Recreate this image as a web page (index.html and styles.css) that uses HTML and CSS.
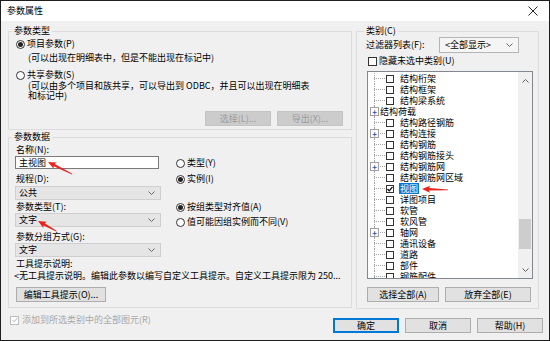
FILE: index.html
```html
<!DOCTYPE html>
<html lang="zh-CN">
<head>
    <meta charset="UTF-8">
    <meta name="viewport" content="width=device-width, initial-scale=1.0">
    <title>参数属性</title>
    <link rel="stylesheet" href="styles.css">
</head>
<body>
<div class="dialog">
    <div class="titlebar">
        <span class="title">参数属性</span>
        <svg class="close" width="10" height="10" viewBox="0 0 10 10"><path d="M0.5 0.5L9.5 9.5M9.5 0.5L0.5 9.5" stroke="#111" stroke-width="0.9" fill="none"/></svg>
    </div>

    <div class="client">
        <div class="main">
            <div class="left-col">
                <!-- 参数类型 -->
                <div class="group group-type">
                    <span class="legend">参数类型</span>
                    <div class="radio-row row-project"><span class="radio checked"></span>项目参数(P)</div>
                    <div class="hint">(可以出现在明细表中，但是不能出现在标记中)</div>
                    <div class="radio-row row-shared"><span class="radio"></span>共享参数(S)</div>
                    <div class="hint hint-multi">(可以由多个项目和族共享，可以导出到 ODBC，并且可以出现在明细表<br>和标记中)</div>
                    <div class="btn-row">
                        <button class="btn disabled">选择(L)...</button>
                        <button class="btn disabled">导出(X)...</button>
                    </div>
                </div>

                <!-- 参数数据 -->
                <div class="group group-data">
                    <span class="legend">参数数据</span>
                    <div class="fields">
                        <div class="fcol">
                            <div class="flabel">名称(N):</div>
                            <div class="input">主视图</div>
                            <div class="flabel lbl-discipline">规程(D):</div>
                            <div class="select sel-first"><span>公共</span><svg width="7" height="4" viewBox="0 0 7 4"><path d="M0.5 0.5L3.5 3.5L6.5 0.5" stroke="#666" fill="none"/></svg></div>
                            <div class="flabel lbl-type">参数类型(T):</div>
                            <div class="select"><span>文字</span><svg width="7" height="4" viewBox="0 0 7 4"><path d="M0.5 0.5L3.5 3.5L6.5 0.5" stroke="#666" fill="none"/></svg></div>
                            <div class="flabel lbl-group">参数分组方式(G):</div>
                            <div class="select"><span>文字</span><svg width="7" height="4" viewBox="0 0 7 4"><path d="M0.5 0.5L3.5 3.5L6.5 0.5" stroke="#666" fill="none"/></svg></div>
                        </div>
                        <div class="rcol">
                            <div class="radio-row r-type"><span class="radio"></span>类型(Y)</div>
                            <div class="radio-row r-inst"><span class="radio checked"></span>实例(I)</div>
                            <div class="radio-row r-align"><span class="radio checked"></span>按组类型对齐值(A)</div>
                            <div class="radio-row r-vary"><span class="radio"></span>值可能因组实例而不同(V)</div>
                        </div>
                    </div>
                    <div class="flabel lbl-tip">工具提示说明:</div>
                    <div class="tip-text">&lt;无工具提示说明。编辑此参数以编写自定义工具提示。自定义工具提示限为 250...</div>
                    <button class="btn btn-tip">编辑工具提示(O)...</button>
                </div>
            </div>

            <!-- 类别 -->
            <div class="group group-cat">
                <span class="legend legend-cat">类别(C)</span>
                <div class="filter-row">
                    <span class="filter-label">过滤器列表(F):</span>
                    <div class="select select-filter"><span>&lt;全部显示&gt;</span><svg width="7" height="4" viewBox="0 0 7 4"><path d="M0.5 0.5L3.5 3.5L6.5 0.5" stroke="#666" fill="none"/></svg></div>
                </div>
                <div class="check-row"><span class="cb"></span>隐藏未选中类别(U)</div>

                <div class="listbox">
                    <div class="items">
                        <div class="row"><span class="tree"></span><span class="cb"></span>结构桁架</div>
                        <div class="row"><span class="tree"></span><span class="cb"></span>结构框架</div>
                        <div class="row"><span class="tree"></span><span class="cb"></span>结构梁系统</div>
                        <div class="row"><span class="tree short"><span class="exp">+</span></span>结构荷载</div>
                        <div class="row"><span class="tree"></span><span class="cb"></span>结构路径钢筋</div>
                        <div class="row"><span class="tree"><span class="exp">+</span></span><span class="cb"></span>结构连接</div>
                        <div class="row"><span class="tree"></span><span class="cb"></span>结构钢筋</div>
                        <div class="row"><span class="tree"></span><span class="cb"></span>结构钢筋接头</div>
                        <div class="row"><span class="tree"><span class="exp">+</span></span><span class="cb"></span>结构钢筋网</div>
                        <div class="row"><span class="tree"></span><span class="cb"></span>结构钢筋网区域</div>
                        <div class="row"><span class="tree"></span><span class="cb checked"><svg width="6" height="6" viewBox="0 0 6 6"><path d="M0.5 3L2.2 4.8L5.5 0.8" stroke="#000" stroke-width="1.2" fill="none"/></svg></span><span class="sel">视图</span></div>
                        <div class="row"><span class="tree"></span><span class="cb"></span>详图项目</div>
                        <div class="row"><span class="tree"></span><span class="cb"></span>软管</div>
                        <div class="row"><span class="tree"></span><span class="cb"></span>软风管</div>
                        <div class="row"><span class="tree"><span class="exp">+</span></span><span class="cb"></span>轴网</div>
                        <div class="row"><span class="tree"></span><span class="cb"></span>通讯设备</div>
                        <div class="row"><span class="tree"></span><span class="cb"></span>道路</div>
                        <div class="row"><span class="tree"></span><span class="cb"></span>部件</div>
                        <div class="row"><span class="tree"></span><span class="cb"></span>钢筋配件</div>
                    </div>
                    <div class="scroll">
                        <div class="sb-btn"><svg width="7" height="4" viewBox="0 0 7 4"><path d="M0.5 3.5L3.5 0.5L6.5 3.5" stroke="#606060" fill="none"/></svg></div>
                        <div class="thumb"></div>
                        <div class="sb-space"></div>
                        <div class="sb-btn"><svg width="7" height="4" viewBox="0 0 7 4"><path d="M0.5 0.5L3.5 3.5L6.5 0.5" stroke="#606060" fill="none"/></svg></div>
                    </div>
                </div>

                <div class="cat-buttons">
                    <button class="btn btn-all">选择全部(A)</button>
                    <button class="btn btn-none">放弃全部(E)</button>
                </div>
            </div>
        </div>

        <div class="footer">
            <div class="check-row disabled-check"><span class="cb"><svg width="6" height="6" viewBox="0 0 6 6"><path d="M0.5 3L2.2 4.8L5.5 0.8" stroke="#b5b5b5" stroke-width="1" fill="none"/></svg></span>添加到所选类别中的全部图元(R)</div>
            <button class="btn btn-ok">确定</button>
            <button class="btn">取消</button>
            <button class="btn">帮助(H)</button>
        </div>
    </div>

    <!-- 标注箭头 -->
    <svg class="marks" width="550" height="341" viewBox="0 0 550 341">
        <polygon transform="translate(48 162) rotate(26.6)" points="0,0 8,-3.5 7,-1.3 27,-0.4 27,0.4 7,1.3 8,3.5" fill="#e8261f"/>
        <polygon transform="translate(38 221) rotate(29)" points="0,0 8,-3.5 7,-1.3 21,-0.4 21,0.4 7,1.3 8,3.5" fill="#e8261f"/>
        <polygon transform="translate(422 189) rotate(2)" points="0,0 8,-3.5 7,-1.3 26,-0.4 26,0.4 7,1.3 8,3.5" fill="#e8261f"/>
    </svg>
</div>
</body>
</html>
```

FILE: styles.css
```css
/* окно диалога */
body {
    margin: 0;
}

.dialog {
    position: relative;
    width: 550px;
    height: 341px;
    box-sizing: border-box;
    border: 1px solid #1e1e1e;
    display: flex;
    flex-direction: column;
    background: #f0f0f0;
    color: #000;
    font-family: "Noto Sans CJK SC", sans-serif;
    font-size: 9px;
    line-height: 12px;
}

.titlebar {
    height: 20px;
    background: #fff;
    display: flex;
    align-items: center;
    justify-content: space-between;
    padding: 0 11px 0 6px;
}

.client {
    flex: 1;
    padding: 10px 6px 0 7px;
}

.main {
    display: flex;
    gap: 4px;
}

.left-col {
    width: 344px;
    display: flex;
    flex-direction: column;
    gap: 7px;
}

/* рамки групп */
.group {
    box-sizing: border-box;
    border: 1px solid #dcdcdc;
}

.legend {
    display: block;
    width: fit-content;
    margin: -7px 0 0 3px;
    padding: 0 2px;
    background: #f0f0f0;
    line-height: 12px;
}

.group-type {
    height: 99px;
}

.group-data {
    height: 171px;
}

.group-cat {
    width: 183px;
    height: 278px;
}

/* радиокнопки */
.radio-row {
    display: flex;
    align-items: center;
    height: 12px;
    white-space: nowrap;
}

.radio {
    width: 9px;
    height: 9px;
    box-sizing: border-box;
    border: 1px solid #333;
    border-radius: 50%;
    background: #fff;
    margin-right: 2px;
    display: flex;
    align-items: center;
    justify-content: center;
    flex: none;
}

.radio.checked::after {
    content: "";
    width: 5px;
    height: 5px;
    border-radius: 50%;
    background: #222;
}

.row-project {
    margin-top: 1px;
    padding-left: 7px;
}

.row-shared {
    margin-top: 5px;
    padding-left: 7px;
}

.hint {
    padding-left: 19px;
    margin-top: 2px;
    white-space: nowrap;
}

.hint-multi {
    margin-top: 0;
    line-height: 10px;
}

/* кнопки */
.btn {
    height: 15px;
    width: 66px;
    padding: 0;
    box-sizing: border-box;
    border: 1px solid #adadad;
    background: #e1e1e1;
    font-family: inherit;
    font-size: 9px;
    line-height: 13px;
    color: #000;
    white-space: nowrap;
}

.btn.disabled {
    background: #cccccc;
    border-color: #c4c4c4;
    color: #9b9b9b;
}

.btn-row {
    display: flex;
    justify-content: flex-end;
    gap: 6px;
    margin-top: 10px;
    padding-right: 8px;
}

/* поля данных */
.fields {
    display: flex;
    margin-top: 1px;
}

.fcol {
    width: 146px;
    margin-left: 6px;
}

.flabel {
    padding-left: 1px;
    line-height: 12px;
    white-space: nowrap;
}

.input {
    width: 144px;
    height: 13px;
    box-sizing: border-box;
    border: 1px solid #7a7a7a;
    background: #fff;
    padding-left: 3px;
    line-height: 11px;
}

.select {
    height: 14px;
    box-sizing: border-box;
    border: 1px solid #cfcfcf;
    background: #e5e5e5;
    display: flex;
    align-items: center;
    justify-content: space-between;
    padding: 0 5px 0 3px;
    line-height: 12px;
}

.lbl-discipline {
    margin-top: 4px;
}

.sel-first {
    margin-top: 1px;
}

.lbl-type {
    margin-top: 1px;
}

.lbl-group {
    margin-top: 4px;
}

.rcol {
    margin-left: 15px;
}

.r-type {
    margin-top: 13px;
}

.r-inst {
    margin-top: 4px;
}

.r-align {
    margin-top: 16px;
}

.r-vary {
    margin-top: 3px;
}

.lbl-tip {
    margin-top: 1px;
    padding-left: 7px;
}

.tip-text {
    padding-left: 5px;
    white-space: nowrap;
}

.btn-tip {
    display: block;
    width: 90px;
    margin: 5px 0 0 7px;
}

/* категории */
.legend-cat {
    margin-left: 7px;
}

.filter-row {
    display: flex;
    align-items: center;
    height: 16px;
}

.filter-label {
    width: 73px;
    padding-left: 9px;
    white-space: nowrap;
}

.select-filter {
    width: 80px;
    height: 16px;
    border-color: #b5b5b5;
    background: #f5f5f5;
    padding-left: 5px;
}

.check-row {
    display: flex;
    align-items: center;
    height: 12px;
    margin-top: 2px;
    padding-left: 11px;
    white-space: nowrap;
}

.cb {
    width: 9px;
    height: 9px;
    box-sizing: border-box;
    border: 1px solid #333;
    background: #fff;
    margin-right: 2px;
    flex: none;
    display: flex;
    align-items: center;
    justify-content: center;
}

.listbox {
    display: flex;
    width: 166px;
    height: 208px;
    box-sizing: border-box;
    margin: 4px 0 0 10px;
    border: 1px solid #828790;
    background: #fff;
}

.items {
    flex: 1;
    overflow: hidden;
    padding-top: 1px;
}

.row {
    display: flex;
    align-items: center;
    height: 11px;
    line-height: 11px;
    white-space: nowrap;
}

.row .cb {
    width: 8px;
    height: 8px;
    margin-right: 6px;
}

.tree {
    width: 18px;
    height: 11px;
    flex: none;
    display: flex;
    align-items: center;
    background:
        repeating-linear-gradient(to bottom, #a5a5a5 0 1px, transparent 1px 2px) 6px 0 / 1px 100% no-repeat,
        repeating-linear-gradient(to right, #a5a5a5 0 1px, transparent 1px 2px) 6px 5px / 12px 1px no-repeat;
}

.tree.short {
    width: 12px;
}

.exp {
    width: 9px;
    height: 9px;
    box-sizing: border-box;
    margin-left: 2px;
    border: 1px solid #a0a0a0;
    background: #fff;
    color: #2250b0;
    font-size: 8px;
    line-height: 7px;
    text-align: center;
    font-weight: bold;
}

.sel {
    background: #0078d7;
    color: #fff;
    padding: 0 1px;
    margin-left: -1px;
}

.scroll {
    width: 14px;
    flex: none;
    background: #f0f0f0;
    display: flex;
    flex-direction: column;
    align-items: center;
}

.sb-btn {
    height: 17px;
    display: flex;
    align-items: center;
    justify-content: center;
}

.thumb {
    width: 12px;
    height: 30px;
    margin-top: 130px;
    background: #cdcdcd;
}

.sb-space {
    flex: 1;
}

.cat-buttons {
    display: flex;
    gap: 6px;
    margin: 8px 0 0 10px;
}

.btn-all {
    width: 72px;
}

.btn-none {
    width: 86px;
}

/* нижняя строка */
.footer {
    display: flex;
    align-items: flex-start;
    gap: 6px;
    margin-top: 9px;
}

.disabled-check {
    margin: -4px auto 0 0;
    padding-left: 2px;
    color: #a8a8a8;
}

.disabled-check .cb {
    border-color: #bcbcbc;
    margin-right: 3px;
}

.btn-ok {
    border-color: #0078d7;
    box-shadow: inset 0 0 0 1px #0078d7;
}

.marks {
    position: absolute;
    left: -1px;
    top: -1px;
    pointer-events: none;
}
```
